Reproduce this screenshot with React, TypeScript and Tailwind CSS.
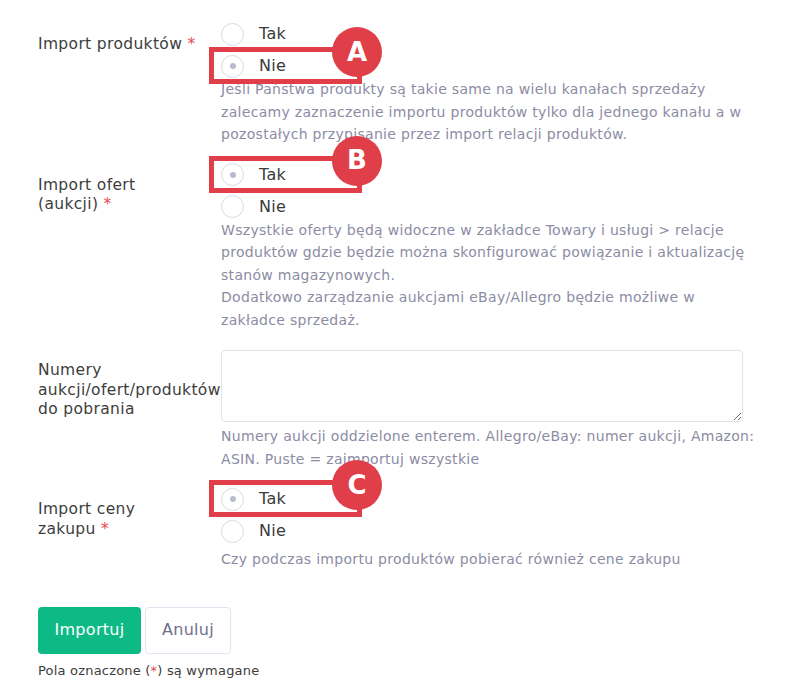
import React from "react";

type Choice = "tak" | "nie";

const font = { fontFamily: '"DejaVu Sans", "Liberation Sans", sans-serif' };

const Marker = ({ letter }: { letter: string }) => (
  <div className="pointer-events-none absolute left-[-12px] top-[-3px] h-[37px] w-[153px] border-[5px] border-[#e03e48]">
    <div className="absolute right-[-25px] top-[-25px] flex h-[50px] w-[50px] items-center justify-center rounded-full bg-[#e03e48] text-[26px] font-bold text-white">
      {letter}
    </div>
  </div>
);

const Radio = ({ label, checked, marker }: { label: string; checked: boolean; marker?: string }) => (
  <div className="relative flex h-8 items-center">
    <span className="flex h-[23px] w-[23px] items-center justify-center rounded-full border border-[#d7dae5] bg-white">
      {checked && <span className="h-[6px] w-[6px] rounded-full bg-[#b7bccf]" />}
    </span>
    <span className="ml-[15px] text-[16px] tracking-[0.3px] text-[#3a3a3a]">{label}</span>
    {marker && <Marker letter={marker} />}
  </div>
);

// keeps the last word together with the required star
const Label = ({ text, required }: { text: string; required?: boolean }) => {
  const cut = text.lastIndexOf(" ");
  const head = required ? text.slice(0, cut + 1) : text;
  const tail = required ? text.slice(cut + 1) : "";
  return (
    <div className="mr-[15px] w-[168px] shrink-0 pt-[17px] text-[15.5px] leading-[19.5px] tracking-[0.35px] text-[#3d3d3d]">
      {head}
      {required && (
        <span className="inline-block whitespace-nowrap">
          {tail} <span className="text-[#e5484d]">*</span>
        </span>
      )}
    </div>
  );
};

const Help = ({ children, className = "" }: { children: React.ReactNode; className?: string }) => (
  <p className={`text-[14px] leading-[22.5px] tracking-[0.3px] text-[#8c8ca4] ${className}`}>{children}</p>
);

const RadioGroup = ({ value, marker }: { value: Choice; marker?: string }) => (
  <div>
    <Radio label="Tak" checked={value === "tak"} marker={value === "tak" ? marker : undefined} />
    <Radio label="Nie" checked={value === "nie"} marker={value === "nie" ? marker : undefined} />
  </div>
);

export default function App() {
  return (
    <div className="min-h-[690px] bg-white pl-[38px] pt-[18px]" style={font}>
      <div className="flex flex-col gap-[13px]">
        <div className="flex">
          <Label required text="Import produktów" />
          <div className="w-[540px]">
            <RadioGroup value="nie" marker="A" />
            <Help className="mt-[-4px]">
              Jeśli Państwa produkty są takie same na wielu kanałach sprzedaży
              <br />
              zalecamy zaznaczenie importu produktów tylko dla jednego kanału a w pozostałych przypisanie przez
              import relacji produktów.
            </Help>
          </div>
        </div>

        <div className="flex">
          <Label required text="Import ofert (aukcji)" />
          <div className="w-[540px]">
            <RadioGroup value="tak" marker="B" />
            <Help className="mt-[-4px]">
              Wszystkie oferty będą widoczne w zakładce Towary i usługi &gt; relacje produktów gdzie będzie można
              skonfigurować powiązanie i aktualizację stanów magazynowych.
              <br />
              Dodatkowo zarządzanie aukcjami eBay/Allegro będzie możliwe w zakładce sprzedaż.
            </Help>
          </div>
        </div>

        <div className="flex">
          <Label text="Numery aukcji/ofert/produktów do pobrania" />
          <div className="w-[540px] pt-[6px]">
            <textarea className="block h-[72px] w-[522px] rounded-[4px] border border-[#e2e3ea] px-3 py-2 text-sm outline-none" />
            <Help className="mt-[3px]">
              Numery aukcji oddzielone enterem. Allegro/eBay: numer aukcji, Amazon: ASIN. Puste = zaimportuj
              wszystkie
            </Help>
          </div>
        </div>

        <div className="flex">
          <Label required text="Import ceny zakupu" />
          <div className="w-[540px]">
            <RadioGroup value="tak" marker="C" />
            <Help className="mt-[1px]">Czy podczas importu produktów pobierać również cene zakupu</Help>
          </div>
        </div>
      </div>

      <div className="mt-[36px] flex gap-1">
        <button className="h-[47px] w-[103px] rounded-[4px] bg-[#0dba86] text-[16px] tracking-[0.3px] text-white">
          Importuj
        </button>
        <button className="h-[47px] w-[86px] rounded-[4px] border border-[#e1e4f0] bg-white text-[16px] tracking-[0.3px] text-[#6f6f8a]">
          Anuluj
        </button>
      </div>
      <p className="mt-[7px] text-[13px] tracking-[0.2px] text-[#3d3d3d]">
        Pola oznaczone (<span className="text-[#e5484d]">*</span>) są wymagane
      </p>
    </div>
  );
}
